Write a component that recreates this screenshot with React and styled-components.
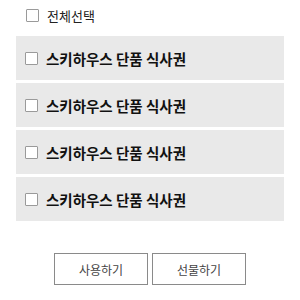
import styled, { createGlobalStyle } from "styled-components"

const GlobalStyle = createGlobalStyle`
  body {
    margin: 0;
    background: #ffffff;
    font-family: "Noto Sans CJK KR", "Noto Sans", sans-serif;
  }
`

const Page = styled.div`
  width: 300px;
  height: 300px;
  display: flex;
  flex-direction: column;
  box-sizing: border-box;
  padding: 0 16px;
`

const AllRow = styled.label`
  display: flex;
  align-items: center;
  gap: 8px;
  height: 31px;
  padding-left: 10px;
  padding-bottom: 5px;
  font-size: 13px;
  color: #222;
`

const Box = styled.span`
  width: 11px;
  height: 11px;
  border: 1px solid #9a9a9a;
  background: #fff;
  border-radius: 1px;
  flex-shrink: 0;
`

const List = styled.div`
  display: flex;
  flex-direction: column;
  gap: 3px;
`

const Item = styled.label`
  display: flex;
  align-items: center;
  gap: 8px;
  height: 44px;
  padding-left: 9px;
  background: #e9e9e9;
  font-size: 14.5px;
  font-weight: 700;
  color: #111;
`

const Buttons = styled.div`
  display: flex;
  justify-content: center;
  gap: 4px;
  margin-top: 32px;
`

const Button = styled.button`
  width: 94px;
  height: 32px;
  background: #fff;
  border: 1px solid #8a8a8a;
  font-family: "Noto Sans CJK KR", sans-serif;
  font-size: 12px;
  color: #444;
  padding: 0;
`

const items = ["스키하우스 단품 식사권", "스키하우스 단품 식사권", "스키하우스 단품 식사권", "스키하우스 단품 식사권"]

function App() {
    return (
        <>
            <GlobalStyle />
            <Page>
                <AllRow>
                    <Box />
                    전체선택
                </AllRow>
                <List>
                    {items.map((name, i) => (
                        <Item key={i}>
                            <Box />
                            {name}
                        </Item>
                    ))}
                </List>
                <Buttons>
                    <Button>사용하기</Button>
                    <Button>선물하기</Button>
                </Buttons>
            </Page>
        </>
    )
}

export default App
